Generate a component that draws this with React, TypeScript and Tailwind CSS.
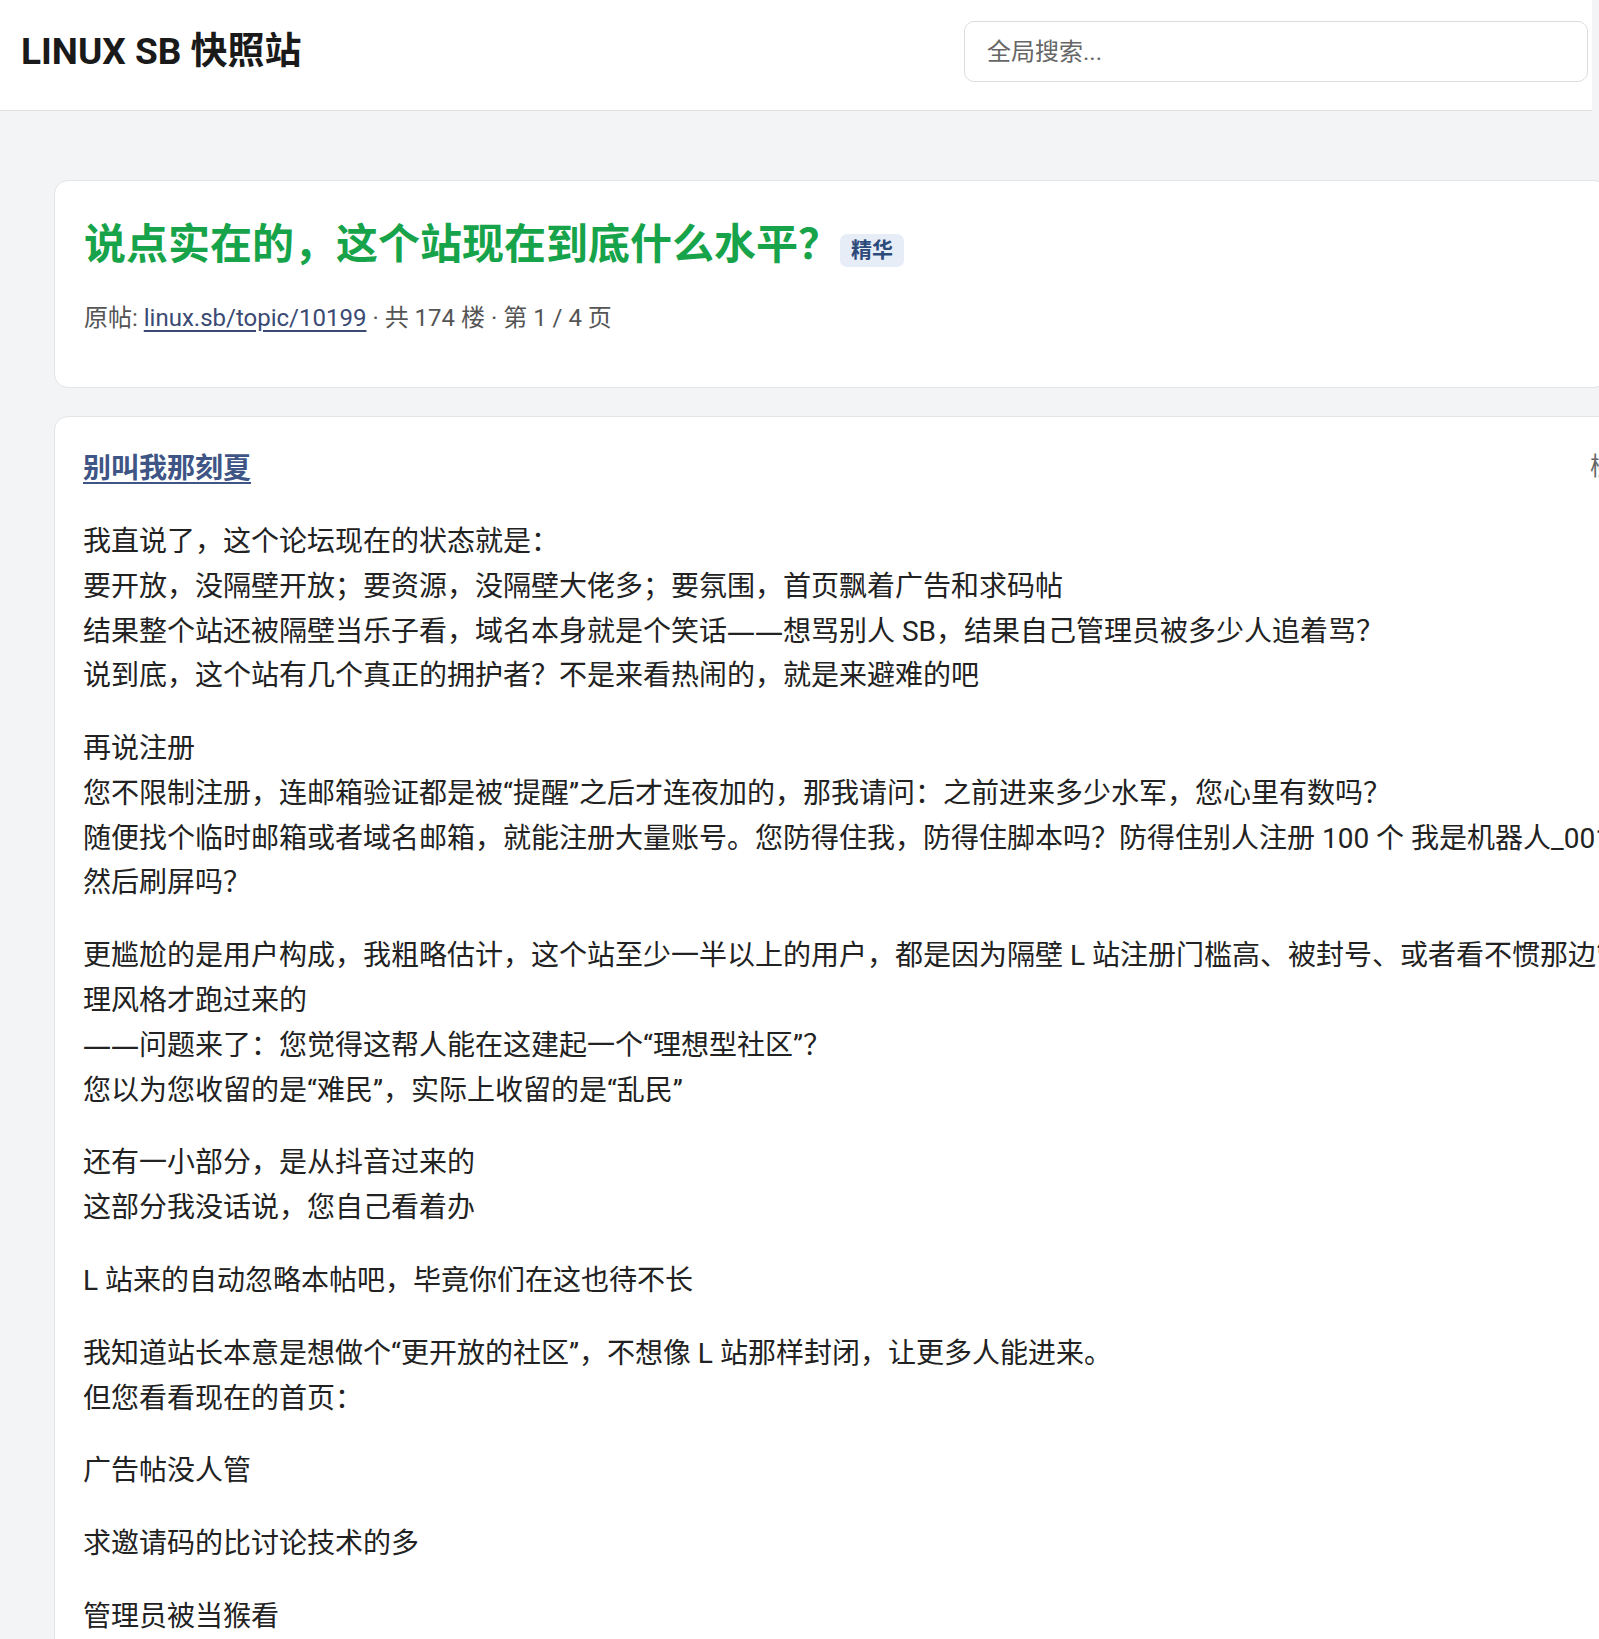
import React from 'react';

const font = { fontFamily: 'Roboto, "Noto Sans CJK SC", sans-serif' };
const dashFont = { fontFamily: '"Noto Sans", "Noto Sans CJK SC", sans-serif' };

const paragraphs: string[][] = [
  [
    '我直说了，这个论坛现在的状态就是：',
    '要开放，没隔壁开放；要资源，没隔壁大佬多；要氛围，首页飘着广告和求码帖',
    '结果整个站还被隔壁当乐子看，域名本身就是个笑话——想骂别人 SB，结果自己管理员被多少人追着骂？',
    '说到底，这个站有几个真正的拥护者？不是来看热闹的，就是来避难的吧',
  ],
  [
    '再说注册',
    '您不限制注册，连邮箱验证都是被“提醒”之后才连夜加的，那我请问：之前进来多少水军，您心里有数吗？',
    '随便找个临时邮箱或者域名邮箱，就能注册大量账号。您防得住我，防得住脚本吗？防得住别人注册 100 个 我是机器人_001',
    '然后刷屏吗？',
  ],
  [
    '更尴尬的是用户构成，我粗略估计，这个站至少一半以上的用户，都是因为隔壁 L 站注册门槛高、被封号、或者看不惯那边管',
    '理风格才跑过来的',
    '——问题来了：您觉得这帮人能在这建起一个“理想型社区”？',
    '您以为您收留的是“难民”，实际上收留的是“乱民”',
  ],
  ['还有一小部分，是从抖音过来的', '这部分我没话说，您自己看着办'],
  ['L 站来的自动忽略本帖吧，毕竟你们在这也待不长'],
  ['我知道站长本意是想做个“更开放的社区”，不想像 L 站那样封闭，让更多人能进来。', '但您看看现在的首页：'],
  ['广告帖没人管'],
  ['求邀请码的比讨论技术的多'],
  ['管理员被当猴看'],
];

// em dashes render as one continuous rule, as in the original
function Line({ text }: { text: string }) {
  const parts = text.split('——');
  return (
    <>
      {parts.map((part, i) => (
        <React.Fragment key={i}>
          {i > 0 && (
            <span className="leading-none" style={dashFont}>
              ——
            </span>
          )}
          {part}
        </React.Fragment>
      ))}
    </>
  );
}

export default function App() {
  return (
    <div className="min-h-screen w-full overflow-hidden bg-[#f3f4f6] text-[#222]" style={font}>
      <header className="flex w-[1592px] items-center justify-between border-b border-[#e0e0e0] bg-white pb-[28px] pl-[21px] pr-[4px] pt-[21px]">
        <h1 className="text-[37px] font-bold leading-none text-[#1a1a1a]">LINUX SB 快照站</h1>
        <input
          type="text"
          placeholder="全局搜索..."
          className="h-[61px] w-[624px] rounded-[10px] border border-[#dcdcdc] bg-white px-[22px] text-[24px] outline-none placeholder:text-[#666]"
          style={font}
        />
      </header>

      <main className="flex flex-col gap-[28px] pl-[54px] pt-[69px]">
        <section className="w-[1554px] rounded-[14px] border border-[#e3e4e8] bg-white px-[29px] pb-[49px] pt-[37px]">
          <div className="flex items-center">
            <h2 className="text-[42px] font-bold leading-[53px] text-[#16a34a]">说点实在的，这个站现在到底什么水平？</h2>
            <span className="mt-[12px] rounded-[7px] bg-[#e6edf7] px-[11px] py-[3px] text-[21px] font-bold leading-[1.3] text-[#2c4a7a]">
              精华
            </span>
          </div>
          <p className="mt-[28px] text-[24px] leading-[1.63] text-[#555]">
            原帖: <a className="text-[#3b4a73] underline underline-offset-4">linux.sb/topic/10199</a> · 共 174 楼 · 第 1 / 4 页
          </p>
        </section>

        <article className="w-[1614px] rounded-[14px] border border-[#e3e4e8] bg-white px-[28px] pb-[28px] pt-[30px]">
          <div className="flex items-start justify-between">
            <a className="text-[28px] font-bold leading-[1.6] text-[#3e5585] underline underline-offset-4">别叫我那刻夏</a>
            <span className="text-[24.5px] leading-[1.6] text-[#666]">楼主</span>
          </div>
          <div className="mt-[28px] flex flex-col gap-[28px] text-[28px] leading-[1.6]">
            {paragraphs.map((lines, i) => (
              <p key={i} className="whitespace-nowrap">
                {lines.map((line, j) => (
                  <React.Fragment key={j}>
                    {j > 0 && <br />}
                    <Line text={line} />
                  </React.Fragment>
                ))}
              </p>
            ))}
          </div>
        </article>
      </main>
    </div>
  );
}
